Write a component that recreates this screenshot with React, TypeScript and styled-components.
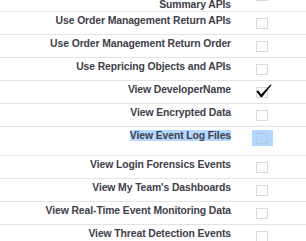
import React from "react";
import styled, { createGlobalStyle } from "styled-components";

const Global = createGlobalStyle`
  html, body { margin: 0; padding: 0; background: #ffffff; overflow: hidden; }
  body { font-family: "Liberation Sans", Arial, Helvetica, sans-serif; }
`;

const Viewport = styled.div`
  width: 306px;
  height: 241px;
  overflow: hidden;
`;

const Table = styled.div`
  margin-top: -16px;
  display: flex;
  flex-direction: column;
`;

const Row = styled.div<{ $h: number; $first?: boolean }>`
  display: grid;
  grid-template-columns: 233px 1fr;
  height: ${(p) => p.$h}px;
  border-top: ${(p) => (p.$first ? "none" : "1px solid #e3e3e3")};
`;

const Label = styled.div`
  padding: 3px 2px 0 0;
  text-align: right;
  font-size: 10.4px;
  letter-spacing: -0.1px;
  line-height: 12px;
  font-weight: bold;
  color: #40404a;
  white-space: nowrap;
`;

const Selected = styled.span`
  background: #b3d7ff;
`;

const BoxCell = styled.div`
  padding: 3px 0 0 19px;
`;

const BoxWrap = styled.span<{ $sel?: boolean }>`
  display: block;
  width: 21px;
  height: 16px;
  background: ${(p) => (p.$sel ? "#b3d7ff" : "transparent")};
`;

const Checkbox: React.FC<{ checked?: boolean; selected?: boolean }> = ({ checked, selected }) => (
  <BoxWrap $sel={selected}>
    <svg width="21" height="16" viewBox="0 0 21 16">
      <rect
        x="4.5"
        y="3.5"
        width="11"
        height="10"
        fill="none"
        stroke="#b5b5b5"
        strokeWidth="1"
        strokeDasharray="1 1"
      />
      {checked && (
        <path d="M4.3 7.6 L6.4 6.4 L9.1 10.2 L18.6 0.4 L19.6 1.1 L10.2 12.9 L8.6 13.1 Z" fill="#000" />
      )}
    </svg>
  </BoxWrap>
);

type Item = { label: React.ReactNode; h: number; checked?: boolean; selected?: boolean };

const items: Item[] = [
  { label: <>Use Order Management Order<br />Summary APIs</>, h: 27 },
  { label: "Use Order Management Return APIs", h: 22 },
  { label: "Use Order Management Return Order", h: 22 },
  { label: "Use Repricing Objects and APIs", h: 22 },
  { label: "View DeveloperName", h: 22, checked: true },
  { label: "View Encrypted Data", h: 22 },
  { label: <Selected>View Event Log Files </Selected>, h: 28, selected: true },
  { label: "View Login Forensics Events", h: 22 },
  { label: "View My Team's Dashboards", h: 22 },
  { label: "View Real-Time Event Monitoring Data", h: 22 },
  { label: "View Threat Detection Events", h: 22 },
];

export default function App() {
  return (
    <Viewport>
      <Global />
      <Table>
        {items.map((it, i) => (
          <Row key={i} $h={it.h} $first={i === 0}>
            <Label>{it.label}</Label>
            <BoxCell>
              <Checkbox checked={it.checked} selected={it.selected} />
            </BoxCell>
          </Row>
        ))}
      </Table>
    </Viewport>
  );
}
